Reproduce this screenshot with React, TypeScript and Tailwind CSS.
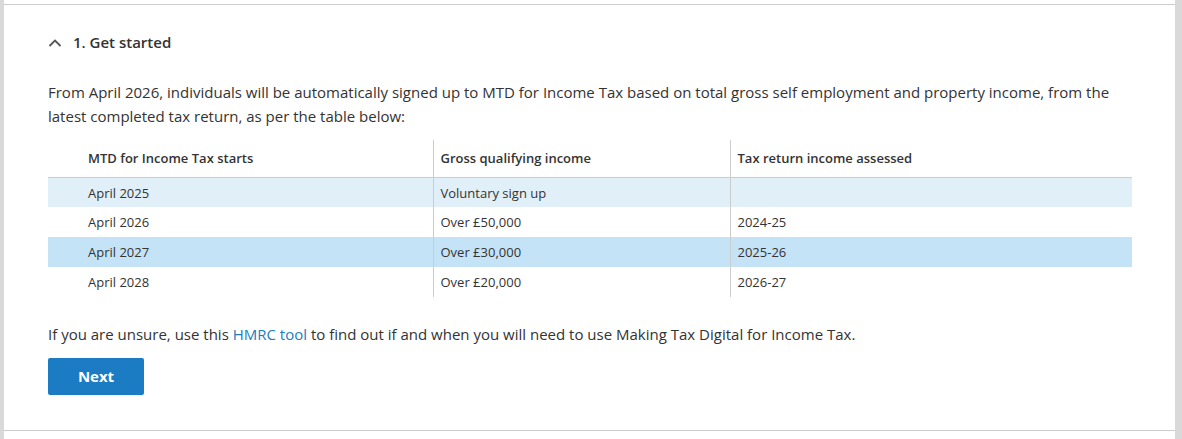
import React from 'react';

const rows = [
  { starts: 'April 2025', income: 'Voluntary sign up', year: '', bg: 'bg-[#e1eff9]' },
  { starts: 'April 2026', income: 'Over £50,000', year: '2024-25', bg: 'bg-white' },
  { starts: 'April 2027', income: 'Over £30,000', year: '2025-26', bg: 'bg-[#c5e3f7]' },
  { starts: 'April 2028', income: 'Over £20,000', year: '2026-27', bg: 'bg-white' },
];

const ChevronUp: React.FC = () => (
  <svg width="14" height="9" viewBox="0 0 14 9" fill="none" className="shrink-0">
    <path d="M1.5 8L7 2.5L12.5 8" stroke="#555" strokeWidth="1.8" />
  </svg>
);

const App: React.FC = () => {
  return (
    <div
      className="flex h-[439px] w-[1182px] bg-[#d9d9d9] pl-[4px] pr-[7px] text-[#333333]"
      style={{ fontFamily: '"Open Sans", "Liberation Sans", sans-serif' }}
    >
      <div className="flex flex-1 flex-col bg-white">
        <div className="h-[5px] border-b border-[#cccccc]" />
        <section className="h-[426px] border-b border-[#cccccc] pl-[44px] pr-[43px]">
          <button className="mt-[25px] flex h-[24px] items-center gap-[11px] text-[15px] font-semibold text-[#333333]">
            <ChevronUp />
            1. Get started
          </button>

          <p className="mt-[26px] text-[15px] leading-[24px]">
            From April 2026, individuals will be automatically signed up to MTD for Income Tax based on total gross self
            employment and property income, from the latest completed tax return, as per the table below:
          </p>

          <table className="mt-[12px] w-[1084px] border-collapse text-[13px]">
            <thead>
              <tr className="h-[37px] border-b border-[#cccccc]">
                <th className="w-[385px] border-r border-[#cccccc] pl-[40px] text-left font-semibold">
                  MTD for Income Tax starts
                </th>
                <th className="w-[297px] border-r border-[#cccccc] pl-[7px] text-left font-semibold">
                  Gross qualifying income
                </th>
                <th className="pl-[7px] text-left font-semibold">Tax return income assessed</th>
              </tr>
            </thead>
            <tbody>
              {rows.map((r) => (
                <tr key={r.starts} className={`h-[30px] ${r.bg}`}>
                  <td className="border-r border-[#cccccc] pl-[40px] pt-[2px]">{r.starts}</td>
                  <td className="border-r border-[#cccccc] pl-[7px] pt-[2px]">{r.income}</td>
                  <td className="pl-[7px] pt-[2px]">{r.year}</td>
                </tr>
              ))}
            </tbody>
          </table>

          <p className="mt-[25px] text-[15px] leading-[24px]">
            If you are unsure, use this{' '}
            <a href="#" className="text-[#1f7cc1]">
              HMRC tool
            </a>{' '}
            to find out if and when you will need to use Making Tax Digital for Income Tax.
          </p>

          <button className="mt-[12px] h-[37px] w-[96px] rounded-[2px] bg-[#1b7bc3] text-[15px] font-bold text-white">
            Next
          </button>
        </section>
      </div>
    </div>
  );
};

export default App;
